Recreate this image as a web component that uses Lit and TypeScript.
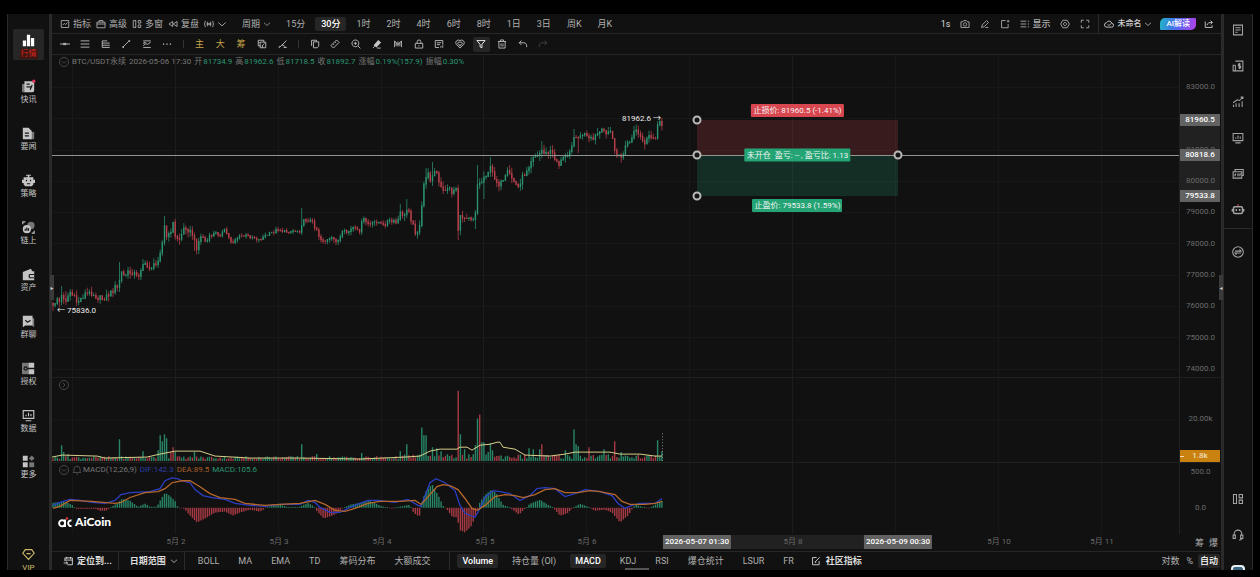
import { LitElement, html, svg, css, type TemplateResult, type SVGTemplateResult } from "lit";
import { customElement, property, state } from "lit/decorators.js";
import { classMap } from "lit/directives/class-map.js";
import { styleMap } from "lit/directives/style-map.js";

/* ---------- icons, drawn on a 16 unit grid ---------- */
const p = (d: string) => svg`<path d=${d}></path>`;
const f = (d: string) => svg`<path class="fill" d=${d}></path>`;

const ICONS: Record<string, SVGTemplateResult> = {
  chartBox: p("M2 2.500h12v11H2zM4.500 9.500l2.500-2.500 2 2 3-3.500"),
  briefcase: p("M1.500 5h13v9h-13zM5 5V2.500h6V5M1.500 8h13"),
  windows: p("M6 2.500H2v11h4M6 2v12M10 2.500h4v4h-4zM10 9.500h4v4h-4z"),
  rewind: p("M7.500 4v8L1.500 8zM14.500 4v8l-6-4z"),
  wave: p("M2.500 3C.5 6 .5 10 2.500 13M13.500 3c2 3 2 7 0 10M5.500 4.500v7M8 6v4M10.500 4.500v7M4 8h8"),
  chevron: p("M2 5.500l6 5.500 6-5.500"),
  camera: p("M1.500 4.500h3l1.500-2h4l1.500 2h3v9h-13zM8 6a2.700 2.700 0 1 0 .01 0z"),
  pen: p("M2.500 13.500l1-4 7-7 3 3-7 7zM8.500 13.500h5"),
  windowPlus: p("M9 2.500H2.500v11.500H13V8M11 3.500h4M13 1.500v4"),
  listDisplay: p("M1 3.500h9M1 8h9M1 12.500h9M12.500 3.500h2M12.500 8h2M12.500 12.500h2"),
  hexGear: p("M4.500 2h7L15 8l-3.500 6h-7L1 8zM8 5.500a2.500 2.500 0 1 0 .01 0z"),
  expand: p("M2 6V2h4M10 2h4v4M14 10v4h-4M6 14H2v-4"),
  cloudCheck: p("M4.500 13a3.500 3.500 0 0 1-.5-7 4.500 4.500 0 0 1 8.500 1 3 3 0 0 1-.5 6zM6 8.500l2 2 3.500-3.500"),
  share: p("M2 4v9.500h11V10M5 10c0-3.500 3-4.500 8-4.500M10.500 2.500l3 3-3 3"),
  hline: p("M0 8h16M5.500 7h4v2h-4z"),
  lines: p("M1 3h14M1 8h14M1 13h14"),
  linesDense: p("M2 3h8M2 6.500h12M2 10h12M2 13.500h12M2 3v10.500"),
  slash: p("M2.500 13.500L13 3M2 12.500h2v2M12 2.500h2v2"),
  zig: p("M2 3h12M2 13.500h12M2 10.500l4-3 3 1 5-3.500M3 8V5.500h3"),
  dots: f("M1.500 7h2v2h-2zM7 7h2v2H7zM12.500 7h2v2h-2z"),
  compare: p("M6 11H2V2h9v3M5 5h9v9H5zM7.500 11.500L12 7M2 5.500h2M9 14v-3"),
  angle: p("M2.500 13.500L13.500 2.500M6 10c3-1 5 1 5 3.500M9 13.500h5M2 11v3"),
  copy: p("M2.500 11V2h8v2M5.500 4.500H14v7l-2.500 2.500h-6z"),
  ruler: p("M1.500 10.500L10.500 1.500l4 4L5.500 14.500zM5 8l1.500 1.500M8 5l1.500 1.500"),
  zoomIn: p("M7 1.500a5.500 5.500 0 1 0 .01 0zM11 11l4 4M7 4.500v5M4.500 7h5"),
  brush: svg`${f("M2.500 10l7.500-8.500 4.500 4L7 13.500z")}${p("M1.500 14.500l3-3M8 14.500h6")}`,
  barsBox: p("M2.500 3v10M5 5.500v6M8 4v8M11 5.500v6M13.500 3v10M2.500 3l5.500 6 5.500-6"),
  lock: p("M2 7h12v7.500H2zM5 7V4.500a3 3 0 0 1 6 0V7M8 10v2"),
  note: p("M14 9V2.500H2v11h6M4.500 6h7M4.500 9h5M11 14v-3M14 14v-4"),
  magnet: p("M8 14.500L2 8.500a4.300 4.300 0 0 1 6-6 4.300 4.300 0 0 1 6 6zM8 11.500L5 8.500a2 2 0 0 1 3-3 2 2 0 0 1 3 3zM8 8v2"),
  funnel: p("M1.500 2.500h13l-5 6V14l-3-1.500v-4z"),
  trash: p("M1.500 4h13M5.500 4V1.500h5V4M3 4v10.500h10V4M6.500 7v5M9.500 7v5"),
  undo: p("M5.500 2.500L2 6l3.500 3.500M2 6h7.500c3 0 4.500 2.500 4.500 7"),
  redo: p("M10.500 2.500L14 6l-3.500 3.500M14 6H6.500C3.500 6 2 8.500 2 13"),
  calendar: p("M3 8V3h12v11H7M6 1.500v3M12 1.500v3M3 6.500h12M1 11h6M5 9l2.500 2L5 13.500"),
  edit: p("M9 2.500H2.500v11.500H13V8M6.500 9.500l7.500-7.500M6 10h2.500"),
  bell: p("M3 12V7a5 5 0 0 1 10 0v5M1.500 12h13M6.500 14.500h3M8 2V.8"),
  circleDown: p("M8 .8a7.200 7.200 0 1 0 .01 0zM4.800 6.800L8 10l3.200-3.200"),
  circleRight: p("M8 .8a7.200 7.200 0 1 0 .01 0zM6.500 4.800L9.500 8l-3 3.200"),
  doc: p("M2 1.500h12v13H2zM4.500 5h7M4.500 8h7M4.500 11h3"),
  moneyDoc: p("M4.500 1.500h10v13h-13V7h3M4.500 7v7.500M11.500 5.500h-3v2.500h3v2.500h-3M10 4v8"),
  growth: p("M2 14.500v-3M5.500 14.500v-5M9.500 14.500v-5M13.500 14.500V7M1.500 9l5.500-4 3 1 4-4M11.500 1.500H14.500V4"),
  monitor: p("M1.500 2h13v9.500h-13zM5 9V7M8 9V4.500M11 9V6M4.500 14.500h7"),
  etf: p("M4 4.500V2h11v8h-2M1.500 5h11.500v8.500H1.500zM4 8v3M4 8h1.500M4 9.500h1M7 8h2M8 8v3M10.500 11V8H12"),
  robotLine: svg`<path class="red" d="M8 0v3"></path><path class="bold" d="M4 3.500h8a2 2 0 0 1 2 2v5a2 2 0 0 1-2 2H4a2 2 0 0 1-2-2v-5a2 2 0 0 1 2-2zM.5 6.500v3.500M15.500 6.500v3.500"></path>${f("M4.800 6.800h2v2.500h-2zM9.200 6.800h2v2.500h-2z")}`,
  swap: p("M8 1a7 7 0 1 0 .01 0zM4 6.800h8L10 4.500M12 9.300H4L6 11.500"),
  layout: p("M2 2h4v12H2zM9.500 2H14v4.500H9.500zM9.500 9.500H14V14H9.500z"),
  headset: p("M3 9V6.500a5 5 0 0 1 10 0V9M1.500 8h3v4.500h-3zM11.500 8h3v4.500h-3zM13 12.500c0 1.500-1 2-3.500 2.500"),
  gem: p("M4 2h8l3 4.500L8 14 1 6.500zM5.500 7h5"),
  // filled icons of the left rail
  bars: f("M1 8h4v7H1zM6 1h4v14H6zM11 5h4v10h-4z"),
  news: svg`<path class="dim" d="M0 5h4v10H0z"></path>${f("M3 1.500h12V13a2 2 0 0 1-2 2H3z")}<path class="cut" d="M5.500 5h4M5.500 8.500h7M10 12l2.500-6"></path><circle class="alert" cx="14.500" cy="1.500" r="2"></circle>`,
  file: svg`<path class="dim" d="M10 6h5v9h-5z"></path>${f("M1 1h7l4 4v10H1z")}<path class="cut" d="M3.500 7.500h5M3.500 11h5"></path>`,
  robot: svg`${f("M2 4h12v9l-2 2H4l-2-2zM0 7h2v4H0zM14 7h2v4h-2zM5 1h6v1H9v2H7V2H5z")}<path class="cut" d="M5.500 7v2M10.500 7v2M6 12h4"></path>`,
  chain: svg`<circle class="dim" cx="11" cy="5.500" r="4.500"></circle><circle class="fill" cx="6" cy="10" r="5"></circle><path class="cut" d="M4 12V9.500M6 12V8M8 12V9"></path>${p("M1 4V1h3M12 15h3v-3")}`,
  wallet: svg`${f("M1 5L11 1l1.500 3H15v11H1z")}<path class="cut" d="M9 8h6M9 8v4M9 12h6"></path>`,
  chat: svg`<path class="dim" d="M12 4h3v11l-3-2z"></path>${f("M1 1h12v12H4l-3 2z")}<path class="cut" d="M4 6.500l3 2.500 3.500-2.500"></path>`,
  key: svg`<path class="dim" d="M0 1h8v14H0z"></path>${f("M8 1h7v6H8zM8 9h7v6H8z")}<path class="cut" d="M4.500 6a2 2 0 1 0 .01 0zM7 8h6"></path>`,
  more: svg`${f("M1 1h6v6H1zM1 9h6v6H1z")}<path class="dim" d="M9 9h6v6H9z"></path><path class="dim" d="M12 .5L15.500 4 12 7.500 8.500 4z"></path>`,
};

const icon = (name: string) => html`<svg class="icon" viewBox="0 0 16 16" aria-hidden="true">${ICONS[name]}</svg>`;

const shared = css`
  :host, * { box-sizing: border-box; }
  button {
    font: inherit; color: inherit; background: none; border: 0; padding: 0; margin: 0;
    display: inline-flex; align-items: center; justify-content: center; white-space: nowrap; cursor: pointer;
  }
  .icon { width: 10px; height: 10px; flex: none; fill: none; stroke: currentColor; stroke-width: 1.400; display: block; overflow: visible; }
  .icon .fill { fill: currentColor; stroke: none; }
  .icon .dim { fill: #777; stroke: none; }
  .icon .cut { stroke: #161616; stroke-width: 1.500; }
  .icon .alert { fill: #e0355a; stroke: none; }
  .icon .red { stroke: #c44; }
  .icon .bold { stroke-width: 2; }
`;

/* ---------- market data ---------- */
type Pt = [number, number];
const STEP = 2.144;
const X0 = 53;
const COUNT = 285;

const PRICE_PATH: Pt[] = [
  [53,307],[57,298],[60,303],[62,295],[66,300],[70,292],[73,296],[77,302],[80,300],[85,294],[92,293],[97,297],[102,299],[107,296],[112,292],[115,287],[119,289],[120,270],[124,276],[128,273],[133,272],[137,277],[140,273],[142,263],[147,267],[152,267],[156,265],[159,255],[162,245],[165,223],[167,240],[170,233],[173,223],[175,237],[180,239],[183,230],[186,227],[190,232],[193,235],[196,249],[198,243],[202,235],[206,243],[209,237],[215,233],[220,235],[225,230],[230,240],[232,243],[237,238],[242,236],[248,236],[253,237],[259,240],[265,236],[272,233],[278,229],[285,232],[292,231],[300,231],[302,223],[307,219],[312,222],[317,230],[320,239],[325,241],[332,239],[339,241],[342,233],[348,232],[353,228],[359,232],[363,219],[370,225],[377,221],[383,226],[388,221],[397,223],[401,212],[405,217],[408,205],[412,223],[416,233],[420,227],[422,205],[423,188],[427,172],[430,180],[433,172],[437,173],[438,182],[443,192],[447,187],[452,192],[457,187],[458,230],[461,215],[465,218],[468,215],[472,219],[474,218],[477,203],[478,167],[480,187],[483,178],[487,173],[490,168],[495,178],[498,184],[503,183],[508,172],[513,180],[518,188],[521,180],[525,173],[530,163],[533,155],[537,157],[542,150],[547,155],[550,150],[554,157],[559,164],[563,159],[568,153],[573,142],[577,133],[579,140],[583,133],[588,139],[593,140],[598,133],[605,131],[610,132],[613,140],[616,156],[619,157],[623,155],[627,142],[630,143],[635,131],[640,137],[644,143],[650,137],[655,138],[658,123],[662,125],
];
const HIGHS: Pt[] = [[62,286],[66,291],[120,262],[142,259],[165,216],[173,222],[302,208],[401,204],[407,199],[427,168],[433,162],[478,165],[490,157],[542,141],[574,129],[658,121]];
const LOWS: Pt[] = [[53,311],[66,305],[138,280],[195,251],[416,236],[458,240],[476,229],[483,199],[579,153],[616,158],[623,160]];
const VOLUME_SPIKES: Pt[] = [
  [62,16],[64,9],[67,7],[120,22],[142,10],[158,11],[160,26],[162,20],[165,27],[167,23],[170,9],[173,14],[175,9],[195,9],[302,17],[317,7],[362,8],[401,10],[407,17],[422,34],[424,26],[426,26],[432,14],[437,13],[441,10],[458,71],[461,27],[465,12],[475,16],[477,43],[480,47],[482,19],[484,19],[488,9],[490,18],[493,11],[529,13],[533,12],[540,12],[542,17],[565,11],[574,32],[576,17],[579,15],[589,14],[604,12],[615,20],[622,9],[658,21],[662,10],
];
const VOLUME_MA: Pt[] = [[52,457],[62,455],[97,456],[105,458],[147,457],[160,454],[175,451],[200,451],[215,456],[250,458],[300,458],[360,459],[405,457],[420,456],[430,451],[440,449],[457,449],[460,447],[467,447],[472,450],[480,445],[490,444],[497,442],[500,442],[503,447],[515,449],[525,455],[550,456],[565,454],[575,452],[610,452],[620,454],[640,454],[655,456],[662,456]];
const DIF: Pt[] = [[53,505],[60,502],[70,499],[80,500],[92,502],[105,503],[115,500],[121,494],[130,492],[150,491],[160,488],[165,480],[172,477],[178,478],[182,480],[190,482],[195,489],[203,495],[212,497],[225,499],[235,503],[250,505],[265,506],[280,504],[300,504],[308,500],[315,502],[320,507],[330,512],[340,512],[350,507],[360,503],[368,500],[378,500],[395,502],[408,499],[418,505],[421,506],[425,495],[430,482],[436,478],[445,482],[455,490],[460,505],[465,513],[475,517],[480,508],[485,497],[493,490],[500,491],[510,493],[520,500],[530,495],[537,488],[545,487],[555,488],[565,496],[575,493],[585,489],[600,491],[612,495],[618,503],[625,508],[632,505],[640,503],[655,503],[662,498]];
const DEA: Pt[] = [[53,508],[60,506],[70,500],[92,501],[115,503],[121,502],[130,497],[145,492],[158,491],[165,488],[172,482],[182,480],[190,480],[200,486],[210,493],[220,497],[235,499],[245,503],[265,505],[280,504],[300,503],[315,500],[325,504],[335,510],[345,511],[355,508],[368,503],[380,501],[400,501],[415,500],[421,504],[430,494],[437,486],[443,484],[450,485],[458,489],[465,498],[472,508],[477,510],[485,505],[495,496],[505,494],[515,495],[523,497],[535,494],[545,489],[555,488],[565,492],[578,492],[590,490],[600,491],[615,494],[622,501],[630,504],[645,504],[655,503],[662,501]];
const HIST: Pt[] = [[52,5],[65,6],[72,3],[76,-1],[95,-1],[100,-3],[106,-3],[112,1],[118,5],[122,9],[130,7],[138,1],[145,4],[150,1],[157,1],[160,7],[165,15],[170,12],[175,7],[178,0],[184,-1],[190,-8],[197,-15],[205,-11],[215,-5],[225,-4],[233,-8],[240,-5],[250,-2],[260,-4],[268,1],[280,3],[290,0],[300,1],[308,5],[314,1],[317,-4],[324,-11],[335,-7],[342,-1],[350,3],[360,5],[370,7],[380,2],[392,-1],[400,1],[410,3],[413,-4],[417,-8],[420,-8],[421,3],[425,15],[432,24],[438,13],[443,2],[447,-2],[452,-9],[457,-10],[460,-23],[465,-25],[472,-18],[477,-3],[479,4],[485,13],[491,18],[496,15],[503,3],[510,0],[515,-4],[519,-7],[525,-1],[530,4],[540,8],[548,3],[553,0],[560,-8],[567,-6],[573,0],[580,4],[588,1],[595,-3],[605,-2],[612,-5],[620,-15],[628,-8],[635,3],[642,1],[648,-1],[655,3],[662,7]];

const lerp = (pts: Pt[], x: number): number => {
  if (x <= pts[0][0]) return pts[0][1];
  for (let i = 1; i < pts.length; i++) {
    if (x <= pts[i][0]) {
      const [xa, ya] = pts[i - 1];
      const [xb, yb] = pts[i];
      return ya + ((yb - ya) * (x - xa)) / (xb - xa);
    }
  }
  return pts[pts.length - 1][1];
};
const rand = (i: number, k: number) => {
  const v = Math.sin(i * 12.9898 + k * 78.233) * 43758.5453;
  return v - Math.floor(v);
};
const near = (pts: Pt[], x: number) => pts.find(([px]) => Math.abs(px - x) <= STEP / 2);
const polyline = (pts: Pt[]) => pts.map((q) => q.join(",")).join(" ");
const n = (v: number) => v.toFixed(1);

const series = (() => {
  let upBody = "", downBody = "", upWick = "", downWick = "";
  let upVol = "", downVol = "", posHist = "", negHist = "";
  let prev = 303;
  for (let i = 0; i < COUNT; i++) {
    const x = X0 + i * STEP;
    const calm = x > 205 && x < 300 ? 0.7 : x < 200 || x > 400 ? 1.4 : 1;
    const close = lerp(PRICE_PATH, x) + (rand(i, 1) - 0.5) * 4 * calm;
    const up = close <= prev;
    const hi = near(HIGHS, x)?.[1] ?? Math.min(close, prev) - rand(i, 2) * 4 * calm;
    const lo = near(LOWS, x)?.[1] ?? Math.max(close, prev) + rand(i, 3) * 4 * calm;
    const body = `M${n(x)} ${n(Math.min(close, prev) - 0.5)}V${n(Math.max(close, prev) + 0.5)}`;
    const wick = `M${n(x)} ${n(hi)}V${n(lo)}`;
    const spike = near(VOLUME_SPIKES, x);
    const vol = spike ? spike[1] : 2 + rand(i, 4) * (x > 400 ? 5 : 3);
    const bar = `M${n(x)} 461V${n(461 - vol)}`;
    const hist = lerp(HIST, x);
    const histBar = `M${n(x)} 507.300V${n(507.3 - (Math.abs(hist) < 0.6 ? Math.sign(hist || 1) * 0.6 : hist))}`;
    const redVolume = spike ? [458, 480, 542, 589, 615, 170, 173].includes(spike[0]) : !up;
    if (up) { upBody += body; upWick += wick; } else { downBody += body; downWick += wick; }
    if (redVolume) downVol += bar; else upVol += bar;
    if (hist >= 0) posHist += histBar; else negHist += histBar;
    prev = close;
  }
  return { upBody, downBody, upWick, downWick, upVol, downVol, posHist, negHist };
})();

/* ---------- scales, as shares of the plot ---------- */
const PRICE_TOP = 84021;
const PRICE_SPAN = 10277;
const priceY = (v: number) => `${(((PRICE_TOP - v) / PRICE_SPAN) * 100).toFixed(3)}%`;
const timeX = (x: number) => `${(((x - 52) / 1127) * 100).toFixed(3)}%`;
const DAYS = [73, 176, 279, 382, 484, 587, 690, 793, 896, 999, 1102];

@customElement("market-chart")
class MarketChart extends LitElement {
  static styles = [shared, css`
    :host { display: grid; grid-template-columns: minmax(0, 1fr) 42px; grid-template-rows: 322fr 85fr 72fr 17px; min-height: 0; flex: 1; font-size: 8px; line-height: 10px; }
    .pane, .axis { position: relative; min-height: 0; min-width: 0; }
    .axis { border-left: 1px solid #222; }
    .plot { position: absolute; inset: 0; width: 100%; height: 100%; fill: none; display: block; }
    .grid { stroke: #181818; }
    .grid-strong { stroke: #1d1d1d; }
    .up { stroke: #2c9a76; } .down { stroke: #c0424e; }
    .body { stroke-width: 1.400; opacity: .9; } .wick { stroke-width: 1; opacity: .7; } .bar { stroke-width: 1.400; opacity: .85; }
    .ma { stroke: #d9cf8a; stroke-width: 1; }
    .dif { stroke: #2b3fc4; stroke-width: 1.300; } .dea { stroke: #b5672c; stroke-width: 1.300; }
    .ghost { stroke: #888; stroke-dasharray: 1 2; }
    .legend { position: absolute; top: 2px; left: 7px; display: flex; align-items: center; gap: 3px; color: #777; white-space: nowrap; }
    .legend .icon { stroke-width: 1; color: #666; }
    .legend .pair { display: flex; gap: 1px; }
    .legend .val { color: #2b9673; }
    .legend .named { display: flex; align-items: center; gap: 1px; }
    .difc { color: #2b3fa8; } .deac { color: #a8602a; } .macdc { color: #2b9673; }
    .entry { position: absolute; left: 0; right: 0; height: 1px; background: #8f9691; }
    .zone { position: absolute; }
    .loss { background: rgba(214, 69, 80, .2); } .gain { background: rgba(37, 166, 120, .2); }
    .tag { position: absolute; transform: translate(-50%, -50%); border-radius: 1px; padding: 2px 2px 1px; color: #f4f4f4; white-space: nowrap; line-height: 10px; }
    .tag.red { background: #d8464f; } .tag.green { background: #24a474; }
    .tag.above { transform: translate(-50%, -16px); } .tag.below { transform: translate(-50%, 3px); }
    .knob { position: absolute; width: 9px; height: 9px; border: 2px solid #b9b9b9; border-radius: 50%; background: #151515; transform: translate(-50%, -50%); }
    .extreme { position: absolute; color: #eee; white-space: nowrap; transform: translateY(-50%); }
    .extreme.end { transform: translate(-100%, -50%); }
    .tick { position: absolute; left: 0; right: 0; text-align: center; color: #6b6b6b; transform: translateY(-50%); }
    .price { position: absolute; left: 0; right: 1px; line-height: 12px; background: #626262; color: #fff; font-weight: 500; text-align: center; transform: translateY(-50%); }
    .band { position: absolute; background: #212121; left: 0; right: 1px; }
    .vol { background: #c9820f; color: #eedcb8; }
    .vol::before { content: ""; position: absolute; left: 0; top: 6px; width: 4px; height: 1px; background: #eedcb8; }
    .time { position: relative; color: #6b6b6b; }
    .day { position: absolute; top: 3px; transform: translateX(-50%); white-space: nowrap; }
    .stamp { position: absolute; top: 1px; line-height: 14px; padding: 0 2px; background: #626262; color: #fff; font-weight: 500; transform: translateX(-50%); white-space: nowrap; }
    .span { position: absolute; top: 1px; height: 14px; background: #212121; }
    .corner { display: flex; justify-content: flex-end; align-items: center; gap: 5px; padding-right: 3px; color: #aaa; font-size: 9px; }
    .sep { border-top: 1px solid #1f1f1f; }
    .macd { display: flex; flex-direction: column; justify-content: flex-end; }
    .brand { position: relative; display: flex; align-items: center; gap: 3px; padding: 0 0 5px 6px; color: #fff; font: 900 12px/14px Lato, "Open Sans", sans-serif; }
    .brand svg { width: 14px; height: 11px; fill: none; stroke: #fff; stroke-width: 2; }
    .brand .dot { fill: #d33; stroke: none; }
  `];

  private gridLines(top: number, bottom: number, rows: number[]) {
    return svg`
      ${DAYS.map((x) => svg`<line class=${[176, 484, 793].includes(x) ? "grid-strong" : "grid"} x1=${x - 0.5} x2=${x - 0.5} y1=${top} y2=${bottom}></line>`)}
      ${rows.map((y) => svg`<line class="grid" x1="52" x2="1179" y1=${y} y2=${y}></line>`)}`;
  }

  render() {
    const ticks = [83000, 81000, 80000, 79000, 78000, 77000, 76000, 75000, 74000];
    const stop = 81960.5, entry = 80818.6, target = 79533.8;
    const left = timeX(697), right = timeX(898), mid = timeX(797.5);
    const info: [string, string][] = [["开", "81734.9"], ["高", "81962.6"], ["低", "81718.5"], ["收", "81892.7"], ["涨幅", "0.19%(157.9)"], ["振幅", "0.30%"]];
    const zone = (a: number, b: number) => styleMap({ left, right: `calc(100% - ${right})`, top: priceY(a), bottom: `calc(100% - ${priceY(b)})` });
    const at = (x: string, v: number) => styleMap({ left: x, top: priceY(v) });
    return html`
      <section class="pane">
        <svg class="plot" viewBox="52 55 1127 322" preserveAspectRatio="none" role="img" aria-label="BTC/USDT">
          ${this.gridLines(55, 377, [87.5, 118.5, 150.5, 181.5, 212.5, 243.5, 275.5, 306.5, 337.5, 369.5])}
          <path class="up wick" d=${series.upWick}></path><path class="down wick" d=${series.downWick}></path>
          <path class="up body" d=${series.upBody}></path><path class="down body" d=${series.downBody}></path>
        </svg>
        <div class="legend">${icon("circleDown")}<span>BTC/USDT永续</span><span>2026-05-06 17:30</span>
          ${info.map(([k, v]) => html`<span class="pair"><span>${k}</span><span class="val">${v}</span></span>`)}
        </div>
        <span class="extreme" style=${at(timeX(57), 75860)}>← 75836.0</span>
        <span class="extreme end" style=${at(timeX(661), 81980)}>81962.6 →</span>
        <div class="zone loss" style=${zone(stop, entry)}></div>
        <div class="zone gain" style=${zone(entry, target)}></div>
        <div class="entry" style=${styleMap({ top: priceY(entry) })}></div>
        <span class="tag red above" style=${at(mid, stop)}>止损价: 81960.5 (-1.41%)</span>
        <span class="tag green" style=${at(mid, entry)}>未开仓&nbsp; 盈亏: -- , 盈亏比: 1.13</span>
        <span class="tag green below" style=${at(mid, target)}>止盈价: 79533.8 (1.59%)</span>
        <button class="knob" aria-label="止损价" style=${at(left, stop)}></button>
        <button class="knob" aria-label="开仓价" style=${at(left, entry)}></button>
        <button class="knob" aria-label="止盈价" style=${at(left, target)}></button>
        <button class="knob" aria-label="结束时间" style=${at(right, entry)}></button>
      </section>
      <div class="axis">
        <div class="band" style=${styleMap({ top: priceY(stop), bottom: `calc(100% - ${priceY(target)})` })}></div>
        ${ticks.map((t) => html`<span class="tick" style=${styleMap({ top: priceY(t) })}>${t.toFixed(1)}</span>`)}
        ${[stop, entry, target].map((t) => html`<span class="price" style=${styleMap({ top: priceY(t) })}>${t.toFixed(1)}</span>`)}
      </div>
      <section class="pane sep">
        <svg class="plot" viewBox="52 377 1127 85" preserveAspectRatio="none" role="img" aria-label="Volume">
          ${this.gridLines(377, 462, [419.5])}
          <path class="up bar" d=${series.upVol}></path><path class="down bar" d=${series.downVol}></path>
          <line class="ghost" x1="662.500" x2="662.500" y1="461" y2="432"></line>
          <polyline class="ma" points=${polyline(VOLUME_MA)}></polyline>
        </svg>
        <div class="legend">${icon("circleRight")}</div>
      </section>
      <div class="axis sep">
        <span class="tick" style=${styleMap({ top: "49%" })}>20.00k</span>
        <span class="price vol" style=${styleMap({ top: "93%" })}>1.8k</span>
      </div>
      <section class="pane sep macd">
        <svg class="plot" viewBox="52 462 1127 72" preserveAspectRatio="none" role="img" aria-label="MACD">
          ${this.gridLines(462, 534, [])}
          <path class="up bar" d=${series.posHist}></path><path class="down bar" d=${series.negHist}></path>
          <polyline class="dif" points=${polyline(DIF)}></polyline><polyline class="dea" points=${polyline(DEA)}></polyline>
        </svg>
        <div class="legend">${icon("circleDown")}<span class="named">${icon("bell")}<span>MACD(12,26,9)</span></span>
          <span class="difc">DIF:142.3</span><span class="deac">DEA:89.5</span><span class="macdc">MACD:105.6</span></div>
        <div class="brand">
          <svg viewBox="0 0 14 11"><path d="M7 2.500V10M7 5.500a3 3 0 1 0 0 1.500M13.500 3.500a2.800 2.800 0 1 0 0 5.500"></path><circle class="dot" cx="9" cy="1.500" r="1.300"></circle></svg>
          <span>AiCoin</span>
        </div>
      </section>
      <div class="axis sep">
        <span class="tick" style=${styleMap({ top: "13%" })}>500.0</span>
        <span class="tick" style=${styleMap({ top: "63%" })}>0.0</span>
      </div>
      <div class="time">
        <div class="span" style=${styleMap({ left, right: `calc(100% - ${right})` })}></div>
        ${([[176, "5月 2"], [279, "5月 3"], [382, "5月 4"], [485, "5月 5"], [587, "5月 6"], [793, "5月 8"], [999, "5月 10"], [1102, "5月 11"]] as [number, string][]).map(
          ([x, t]) => html`<span class="day" style=${styleMap({ left: timeX(x) })}>${t}</span>`)}
        <span class="stamp" style=${styleMap({ left })}>2026-05-07 01:30</span>
        <span class="stamp" style=${styleMap({ left: right })}>2026-05-09 00:30</span>
      </div>
      <div class="corner"><button>筹</button><button>爆</button></div>
    `;
  }
}

@customElement("side-nav")
class SideNav extends LitElement {
  @state() private active = "行情";
  static styles = [shared, css`
    :host { display: flex; flex-direction: column; width: 42px; flex: none; border-left: 1px solid #2b2b2b; padding-top: 15px; overflow: hidden; color: #c4c4c4; font-size: 8px; line-height: 10px; }
    nav { flex: 1; display: flex; flex-direction: column; justify-content: space-between; align-items: center; min-height: 0; }
    button { flex-direction: column; width: 31px; height: 31px; gap: 2px; padding-top: 3px; border-radius: 2px; }
    .icon { width: 13px; height: 13px; }
    .on { background: #262626; color: #fff; }
    .on span { color: #d5281e; background: #3d1512; padding: 0 1px; }
    .vip { width: auto; height: 22px; margin-top: 66px; padding: 0; gap: 1px; justify-content: flex-start; color: #cdb86a; flex: none; }
    .vip span { line-height: 12px; }
  `];
  render() {
    const items: [string, string][] = [["行情", "bars"], ["快讯", "news"], ["要闻", "file"], ["策略", "robot"], ["链上", "chain"], ["资产", "wallet"], ["群聊", "chat"], ["授权", "key"], ["数据", "monitor"], ["更多", "more"]];
    return html`<nav>${items.map(([label, ic]) => html`
      <button class=${classMap({ on: this.active === label })} @click=${() => (this.active = label)}>${icon(ic)}<span>${label}</span></button>`)}</nav>
      <button class="vip">${icon("gem")}<span>VIP</span></button>`;
  }
}

@customElement("tool-rail")
class ToolRail extends LitElement {
  static styles = [shared, css`
    :host { display: flex; flex-direction: column; align-items: center; width: 29px; flex: none; border-right: 1px solid #2b2b2b; padding-top: 10px; overflow: hidden; color: #a4a4a4; }
    .group { display: flex; flex-direction: column; align-items: center; gap: 24px; align-self: stretch; }
    .top { padding-bottom: 12px; border-bottom: 1px solid #2b2b2b; }
    .second { padding-top: 17px; flex: 1; }
    .icon { width: 12px; height: 12px; }
    .avatar { width: 14px; height: 5px; border-radius: 4px 4px 0 0; background: #3d6680; border: 2px solid #e6eef2; border-bottom: 0; }
  `];
  render() {
    const b = (ic: string, label: string) => html`<button aria-label=${label}>${icon(ic)}</button>`;
    return html`
      <div class="group top">${b("doc", "订单")}${b("moneyDoc", "资金")}${b("growth", "走势")}${b("monitor", "数据")}${b("etf", "ETF")}${b("robotLine", "机器人")}</div>
      <div class="group second">${b("swap", "兑换")}</div>
      <div class="group">${b("layout", "布局")}${b("headset", "客服")}<button class="avatar" aria-label="助手"></button></div>`;
  }
}

@customElement("pane-handle")
class PaneHandle extends LitElement {
  @property() side = "left";
  static styles = [shared, css`
    :host { position: relative; width: 3px; background: #2a2a2a; flex: none; }
    button { position: absolute; top: 47%; width: 4px; height: 25px; background: #3a3a3a; color: #ccc; font: 6px/8px "DejaVu Sans", sans-serif; overflow: hidden; z-index: 1; }
    .left { left: 1px; } .right { right: 1px; }
  `];
  render() {
    return html`<button class=${this.side} aria-label="折叠">${this.side === "left" ? "▸" : "◂"}</button>`;
  }
}

@customElement("app-root")
class AppRoot extends LitElement {
  @state() private period = "30分";
  static styles = [shared, css`
    :host { display: flex; height: 100vh; padding: 14px 7px 7px; background: #000; color: #b0b0b0; font: 9px/12px Roboto, "Noto Sans CJK SC", sans-serif; }
    .shell { display: flex; flex: 1; min-width: 0; background: #111; overflow: hidden; }
    main { flex: 1; min-width: 0; display: flex; flex-direction: column; }
    .row { display: flex; align-items: center; flex: none; border-bottom: 1px solid #262626; }
    .head { height: 20px; padding-left: 8px; }
    .draw { height: 21px; padding-left: 4px; }
    .foot { height: 19px; border-bottom: 0; border-top: 1px solid #262626; overflow: hidden; }
    .menus { display: flex; gap: 5px; }
    .menus button, .named { gap: 3px; }
    .pick { margin-left: 15px; gap: 3px; }
    .small { display: flex; } .small .icon { width: 8px; height: 8px; }
    .periods { display: flex; gap: 4px; margin-left: 9px; }
    .chip { padding: 1px 6px; border-radius: 2px; }
    .on { background: #262626; color: #fff; font-weight: 500; }
    .push { margin-left: auto; }
    .actions { display: flex; align-items: center; gap: 10px; padding-right: 8px; }
    .actions .speed { color: #ddd; }
    .actions .named { gap: 2px; }
    .user { align-self: stretch; display: flex; align-items: center; gap: 8px; border-left: 1px solid #2b2b2b; padding: 0 7px 0 5px; color: #d0d0d0; font-size: 8px; }
    .named { font-weight: 500; }
    .ai { padding: 0 6px; border-radius: 5px 1px 5px 1px; color: #fff; font-weight: 500; background: linear-gradient(100deg, #1fb5c4, #4a6cf0 45%, #b440e8); }
    .set { display: flex; justify-content: space-between; color: #c4c4c4; }
    .set button { width: 17px; height: 15px; border-radius: 2px; }
    .set .gold { color: #c9a64a; }
    .set .faint { color: #444; }
    .s6 { width: 120px; } .s5 { width: 100px; } .s12 { width: 246px; }
    .bar { width: 1px; height: 8px; background: #333; margin: 0 7px; }
    .cell { align-self: stretch; display: flex; align-items: center; border-right: 1px solid #2b2b2b; padding: 0 6px 0 11px; color: #ddd; }
    .cell button { gap: 4px; font-weight: 700; }
    .tabs { display: flex; gap: 9px; padding-left: 8px; }
    .tabs.second { position: relative; padding-left: 7px; }
    .tab { padding: 1px 5px; border-radius: 2px; }
    .wide { padding-right: 14px; padding-left: 0; }
    .thumb { position: absolute; left: 175px; bottom: -2px; width: 24px; height: 2px; background: #555; }
    .scales { display: flex; gap: 3px; padding-right: 1px; }
    .scales .tab { padding: 1px 2px; }
    .strong { font-weight: 700; color: #ddd; gap: 5px; padding-left: 3px; }
  `];

  render(): TemplateResult {
    const b = (ic: string, label: string, cls = "") => html`<button class=${cls} aria-label=${label}>${icon(ic)}</button>`;
    const tab = (t: string, cls = "") => html`<button class="tab ${cls}">${t}</button>`;
    const periods = ["15分", "30分", "1时", "2时", "4时", "6时", "8时", "1日", "3日", "周K", "月K"];
    return html`
      <div class="shell">
        <side-nav></side-nav>
        <pane-handle side="left"></pane-handle>
        <main>
          <header class="row head">
            <div class="menus">
              <button>${icon("chartBox")}指标</button><button>${icon("briefcase")}高级</button><button>${icon("windows")}多窗</button>
              <button>${icon("rewind")}复盘</button><button aria-label="K线样式">${icon("wave")}${icon("chevron")}</button>
            </div>
            <button class="pick">周期<span class="small">${icon("chevron")}</span></button>
            <div class="periods">${periods.map((t) => html`
              <button class=${classMap({ chip: true, on: this.period === t })} @click=${() => (this.period = t)}>${t}</button>`)}</div>
            <div class="actions push">
              <button class="speed">1s</button>${b("camera", "截图")}${b("pen", "画线")}${b("windowPlus", "新窗口")}
              <button class="named">${icon("listDisplay")}显示</button>${b("hexGear", "设置")}${b("expand", "全屏")}
            </div>
            <div class="user">
              <button class="named">${icon("cloudCheck")}未命名<span class="small">${icon("chevron")}</span></button>
              <button class="ai">AI解读</button>${b("share", "分享")}
            </div>
          </header>
          <div class="row draw">
            <div class="set s6">${b("hline", "水平线")}${b("lines", "平行线")}${b("linesDense", "斐波那契")}${b("slash", "线段")}${b("zig", "波浪")}${b("dots", "更多")}</div>
            <i class="bar"></i>
            <div class="set s5"><button class="gold">主</button><button class="gold">大</button><button class="gold">筹</button>${b("compare", "对比")}${b("angle", "角度")}</div>
            <i class="bar"></i>
            <div class="set s12">${b("copy", "复制")}${b("ruler", "测量")}${b("zoomIn", "放大")}${b("brush", "画笔")}${b("barsBox", "形态")}${b("lock", "锁定")}${b("note", "笔记")}${b("magnet", "磁吸")}${b("funnel", "筛选", "on")}${b("trash", "删除")}${b("undo", "撤销")}${b("redo", "重做", "faint")}</div>
          </div>
          <market-chart></market-chart>
          <footer class="row foot">
            <div class="cell"><button>${icon("calendar")}定位到...</button></div>
            <div class="cell"><button>日期范围<span class="small">${icon("chevron")}</span></button></div>
            <div class="tabs">${["BOLL", "MA", "EMA", "TD", "筹码分布", "大额成交"].map((t) => tab(t))}</div>
            <div class="cell wide"></div>
            <div class="tabs second">${tab("Volume", "on")}${tab("持仓量 (OI)")}${tab("MACD", "on")}${["KDJ", "RSI", "爆仓统计", "LSUR", "FR"].map((t) => tab(t))}
              <button class="strong">${icon("edit")}社区指标</button><i class="thumb"></i></div>
            <div class="scales push">${tab("对数")}${tab("%")}${tab("自动", "on")}</div>
          </footer>
        </main>
        <pane-handle side="right"></pane-handle>
        <tool-rail></tool-rail>
      </div>`;
  }
}
